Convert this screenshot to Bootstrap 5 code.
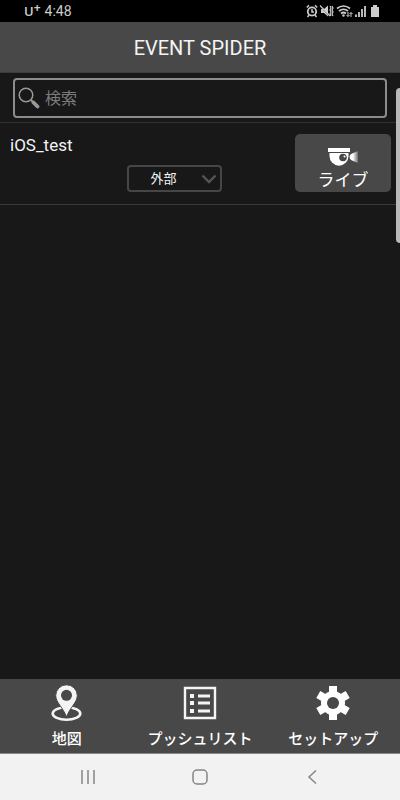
<!DOCTYPE html>
<html lang="ja">
<head>
<meta charset="utf-8">
<meta name="viewport" content="width=device-width, initial-scale=1">
<title>EVENT SPIDER</title>
<link rel="stylesheet" href="https://cdn.jsdelivr.net/npm/bootstrap@5.3.0/dist/css/bootstrap.min.css">
<style>
body { background: #181818; color: #f4f4f4; font-family: Roboto, "Noto Sans CJK JP", sans-serif; }
svg { display: block; }
.status-bar { background: #000; height: 22px; padding: 0 20px 0 24px; color: #ccc; font-size: 14px; line-height: 24px; }
.carrier { font-size: 13px; font-weight: 600; font-family: "Open Sans", sans-serif; margin-right: 4px; }
.carrier sup { font-size: 12px; top: -4px; line-height: 1; vertical-align: baseline; font-weight: 700; }
.title-bar { background: #484848; height: 51px; border-bottom: 1px solid #3c3c3c; }
.title-bar h1 { font-size: 20px; font-weight: 400; line-height: 52px; }
.search-area { padding: 5px 13px 4px; border-bottom: 1px solid #303030; }
.search-box { border: 2px solid #8c8c8c; border-radius: 4px; height: 40px; padding-left: 3px; }
.search-box input { background: transparent; color: #eee; font-size: 16px; line-height: 24px; padding: 2px 5px 0; }
.search-box input:focus { background: transparent; color: #eee; }
.search-box input::placeholder { color: #7c7c7c; opacity: 1; }
.device { padding: 11px 9px 12px 10px; border-bottom: 1px solid #3a3a3a; }
.device h2 { font-size: 17px; line-height: 22px; font-weight: 400; }
.mode-select {
  width: 95px; height: 27px; padding: 0 22px 0 0; margin-right: 73px; text-align: center; text-align-last: center;
  font-size: 13px; line-height: 20px; color: #f4f4f4; border: 2px solid #464646; border-radius: 4px;
  background: #181818 url("data:image/svg+xml,%3Csvg xmlns='http://www.w3.org/2000/svg' viewBox='0 0 16 10'%3E%3Cpath d='M1.5 1.5 8 8l6.500-6.500' fill='none' stroke='%23555' stroke-width='2.400'/%3E%3C/svg%3E") no-repeat right 3px center / 16px 10px;
}
.live-btn { width: 96px; height: 58px; background: #484848; color: #fff; border: 0; border-radius: 5px; font-size: 17px; line-height: 22px; padding: 13px 0 0; gap: 2px; }
.live-btn:hover, .live-btn:active { background: #555; color: #fff; }
.edge-panel { position: fixed; right: 0; top: 88px; width: 4px; height: 155px; background: #b9b9b9; border-radius: 4px 0 0 4px; }
.tab-bar { background: #484848; border-bottom: 1px solid #888; }
.tab-bar a { color: #fff; font-size: 15px; line-height: 22px; font-weight: 500; padding: 6px 0 3px; gap: 7px; }
.system-bar { background: #f2f2f2; height: 46px; padding: 0 8%; }
.system-bar button { color: #858585; border: 0; border-radius: 0; }
</style>
<script src="https://cdn.jsdelivr.net/npm/bootstrap@5.3.0/dist/js/bootstrap.bundle.min.js" defer></script>
</head>
<body class="d-flex flex-column min-vh-100">
<div class="status-bar d-flex align-items-center justify-content-between">
  <div class="d-flex"><span class="carrier">U<sup>+</sup></span><span>4:48</span></div>
  <svg width="74" height="14" viewBox="0 0 74 14" fill="none" stroke="#ccc" aria-hidden="true">
    <circle cx="6" cy="7.500" r="4.200" stroke-width="1.800"/>
    <path d="M6 5v3h2M.8 3.500 3 1.300M11.200 3.500 9 1.300M3 11l-1.500 2M9 11l1.500 2" stroke-width="1.500"/>
    <path d="M15 5h3l4-3.500v11L18 9h-3z" fill="#ccc" stroke="none"/>
    <path d="M14 2l10 10.500" stroke="#000" stroke-width="1"/>
    <path d="M14 1.500l10 10.500" stroke-width="1.200"/>
    <path d="M24 2l1 2-1 2 1 2-1 2 1 2M26 2l1 2-1 2 1 2-1 2 1 2" stroke-width="1.200"/>
    <path d="M31 4.500q6.500-5 13 0M33 7q4.500-3.500 9 0M35 9.500q2.500-2 5 0" stroke-width="1.700"/>
    <circle cx="37.500" cy="11.500" r="1.200" fill="#ccc" stroke="none"/>
    <path d="M42 8v4.500M40.500 11l1.500 1.500L43.500 11M45 13V8.500M43.500 10 45 8.500 46.500 10"/>
    <path d="M50 13v-2.500M53 13V8M56 13V5M59 13V2" stroke-width="1.800"/>
    <path d="M67 1h4v2h2v10h-8V3h2z" fill="#ccc" stroke="none"/>
  </svg>
</div>

<header class="title-bar text-center"><h1 class="m-0">EVENT SPIDER</h1></header>

<main class="flex-grow-1">
  <form class="search-area">
    <div class="search-box d-flex align-items-center">
      <label for="search" aria-label="検索">
        <svg width="22" height="22" viewBox="0 0 22 22" fill="none" stroke="#999" aria-hidden="true">
          <circle cx="8" cy="8" r="6.800" stroke-width="1.500"/>
          <path d="M13 13l3 3" stroke-width="2"/>
          <path d="M15.500 15.500l4 4" stroke-width="3.800" stroke-linecap="round"/>
        </svg>
      </label>
      <input id="search" type="text" class="form-control border-0 shadow-none" placeholder="検索">
    </div>
  </form>

  <section class="device d-flex">
    <div class="flex-grow-1 d-flex flex-column justify-content-between">
      <h2 class="m-0">iOS_test</h2>
      <select class="mode-select form-select align-self-end" aria-label="接続"><option>外部</option><option>内部</option></select>
    </div>
    <button type="button" class="live-btn btn d-flex flex-column align-items-center">
      <svg width="32" height="20" viewBox="0 0 32 20" aria-hidden="true">
        <defs><linearGradient id="beam"><stop offset="0" stop-color="#fff"/><stop offset=".4" stop-color="#fff"/><stop offset="1" stop-color="#fff" stop-opacity=".2"/></linearGradient></defs>
        <path d="M1 1h22v4H1z" fill="#fff"/>
        <path d="M2.500 6h19v3a9.300 9.500 0 0 1-19 0z" fill="#fff"/>
        <circle cx="16" cy="10.500" r="3.800" fill="#484848"/>
        <circle cx="17.500" cy="9.500" r="1" fill="#fff"/>
        <path d="M31 4v12l-7-3q-3-3 0-6z" fill="url(#beam)"/>
      </svg>
      <span>ライブ</span>
    </button>
  </section>
</main>

<nav class="tab-bar d-flex">
  <a href="#map" class="col-4 d-flex flex-column align-items-center text-decoration-none">
    <svg width="34" height="36" viewBox="0 0 34 36" aria-hidden="true">
      <ellipse cx="16.500" cy="28.500" rx="13.800" ry="6.200" fill="none" stroke="#f4f4f4" stroke-width="2.600"/>
      <path d="M16.500-.2A10.800 10.800 0 0 0 5.700 10.500c0 7 7.500 12 10.800 21.500 3.300-9.500 10.800-14.500 10.800-21.500A10.800 10.800 0 0 0 16.500-.2z" fill="#f4f4f4" stroke="#484848" stroke-width="1"/>
      <circle cx="16.500" cy="10.300" r="5.500" fill="#484848"/>
    </svg>
    <span>地図</span>
  </a>
  <a href="#push" class="col-4 d-flex flex-column align-items-center text-decoration-none">
    <svg width="34" height="36" viewBox="0 0 34 36" aria-hidden="true">
      <path d="M2 3h30v30H2z" fill="none" stroke="#f4f4f4" stroke-width="2.400"/>
      <path d="M7 9h4v4H7zM7 16h4v4H7zM7 24h4v4H7zM15 9.500h12v3H15zM15 16.500h12v3H15zM15 24.500h12v3H15z" fill="#f4f4f4"/>
    </svg>
    <span>プッシュリスト</span>
  </a>
  <a href="#setup" class="col-4 d-flex flex-column align-items-center text-decoration-none">
    <svg width="34" height="36" viewBox="0 0 34 36" aria-hidden="true">
      <g fill="#fff">
        <circle cx="17" cy="18" r="12"/>
        <path id="cog" d="M13 1h8v9h-8zM13 26h8v9h-8z"/>
        <use href="#cog" transform="rotate(60 17 18)"/>
        <use href="#cog" transform="rotate(120 17 18)"/>
      </g>
      <circle cx="17" cy="18" r="6" fill="#484848"/>
    </svg>
    <span>セットアップ</span>
  </a>
</nav>

<div class="system-bar d-flex">
  <button type="button" class="btn col-4 p-0 d-flex align-items-center justify-content-center" aria-label="履歴">
    <svg width="16" height="16" viewBox="0 0 16 16" fill="none" stroke="currentColor" stroke-width="1.500"><path d="M2 1v14M8 1v14M14 1v14"/></svg>
  </button>
  <button type="button" class="btn col-4 p-0 d-flex align-items-center justify-content-center" aria-label="ホーム">
    <svg width="16" height="16" viewBox="0 0 16 16" fill="none" stroke="currentColor" stroke-width="1.500"><rect x="1" y="1" width="14" height="14" rx="4"/></svg>
  </button>
  <button type="button" class="btn col-4 p-0 d-flex align-items-center justify-content-center" aria-label="戻る">
    <svg width="16" height="16" viewBox="0 0 16 16" fill="none" stroke="currentColor" stroke-width="1.500"><path d="M12 1.500 5 8l7 6.500"/></svg>
  </button>
</div>
<div class="edge-panel"></div>
</body>
</html>
